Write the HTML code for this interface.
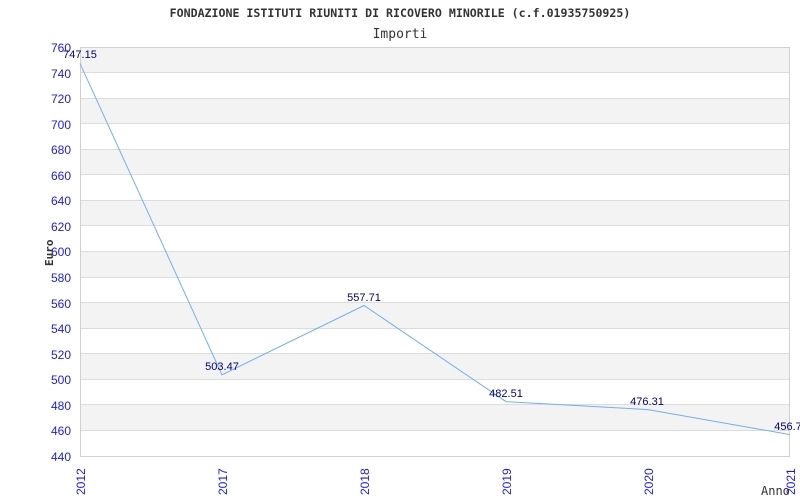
<!DOCTYPE html><html><head><style>body{margin:0;background:#fff}svg{display:block}</style></head><body>
<svg width="800" height="500" xmlns="http://www.w3.org/2000/svg" font-family="Liberation Sans, sans-serif">
<rect width="800" height="500" fill="#fff"/>
<g fill="#f3f3f3">
<rect x="80" y="47" width="710" height="25.56"/>
<rect x="80" y="98.1" width="710" height="25.56"/>
<rect x="80" y="149.2" width="710" height="25.56"/>
<rect x="80" y="200.4" width="710" height="25.56"/>
<rect x="80" y="251.5" width="710" height="25.56"/>
<rect x="80" y="302.6" width="710" height="25.56"/>
<rect x="80" y="353.8" width="710" height="25.56"/>
<rect x="80" y="404.9" width="710" height="25.56"/>
</g>
<g stroke="#dcdcdc" stroke-width="1">
<path d="M80 72.5H790M80 98.5H790M80 123.5H790M80 149.5H790M80 174.5H790M80 200.5H790M80 225.5H790M80 251.5H790M80 277.5H790M80 302.5H790M80 328.5H790M80 353.5H790M80 379.5H790M80 404.5H790M80 430.5H790"/>
<rect x="80.5" y="47.5" width="709" height="409" fill="none" stroke="#d0d0d0"/>
</g>
<polyline points="80,63.4 222,374.8 364,305.5 506,401.6 648,409.6 790,434.6" fill="none" stroke="#70b0f0" stroke-width="1"/>
<text x="400" y="17" text-anchor="middle" font-family="DejaVu Sans Mono, monospace" font-size="11.6" font-weight="bold" fill="#333">FONDAZIONE ISTITUTI RIUNITI DI RICOVERO MINORILE (c.f.01935750925)</text>
<text x="400" y="38" text-anchor="middle" font-family="DejaVu Sans Mono, monospace" font-size="13" fill="#333">Importi</text>
<g font-size="12" fill="#1a1aee" text-anchor="end">
<text x="71" y="52">760</text><text x="71" y="78">740</text><text x="71" y="103">720</text><text x="71" y="129">700</text><text x="71" y="154">680</text><text x="71" y="180">660</text><text x="71" y="205">640</text><text x="71" y="231">620</text><text x="71" y="256">600</text><text x="71" y="282">580</text><text x="71" y="308">560</text><text x="71" y="333">540</text><text x="71" y="359">520</text><text x="71" y="384">500</text><text x="71" y="410">480</text><text x="71" y="435">460</text><text x="71" y="461">440</text>
</g>
<g font-size="12" fill="#1a1aee">
<text transform="translate(85,495) rotate(-90)">2012</text>
<text transform="translate(227,495) rotate(-90)">2017</text>
<text transform="translate(369,495) rotate(-90)">2018</text>
<text transform="translate(511,495) rotate(-90)">2019</text>
<text transform="translate(653,495) rotate(-90)">2020</text>
<text transform="translate(795,495) rotate(-90)">2021</text>
</g>
<text transform="translate(53,266) rotate(-90)" font-family="DejaVu Sans Mono, monospace" font-size="11" font-weight="bold" fill="#333">Euro</text>
<text x="761" y="495" font-family="DejaVu Sans Mono, monospace" font-size="12" fill="#333">Anno</text>
<g font-size="11" fill="#000080" text-anchor="middle">
<text x="80" y="58">747.15</text>
<text x="222" y="370">503.47</text>
<text x="364" y="301">557.71</text>
<text x="506" y="397">482.51</text>
<text x="647" y="405">476.31</text>
<text x="788" y="430">456.7</text>
</g>
</svg>
</body></html>
